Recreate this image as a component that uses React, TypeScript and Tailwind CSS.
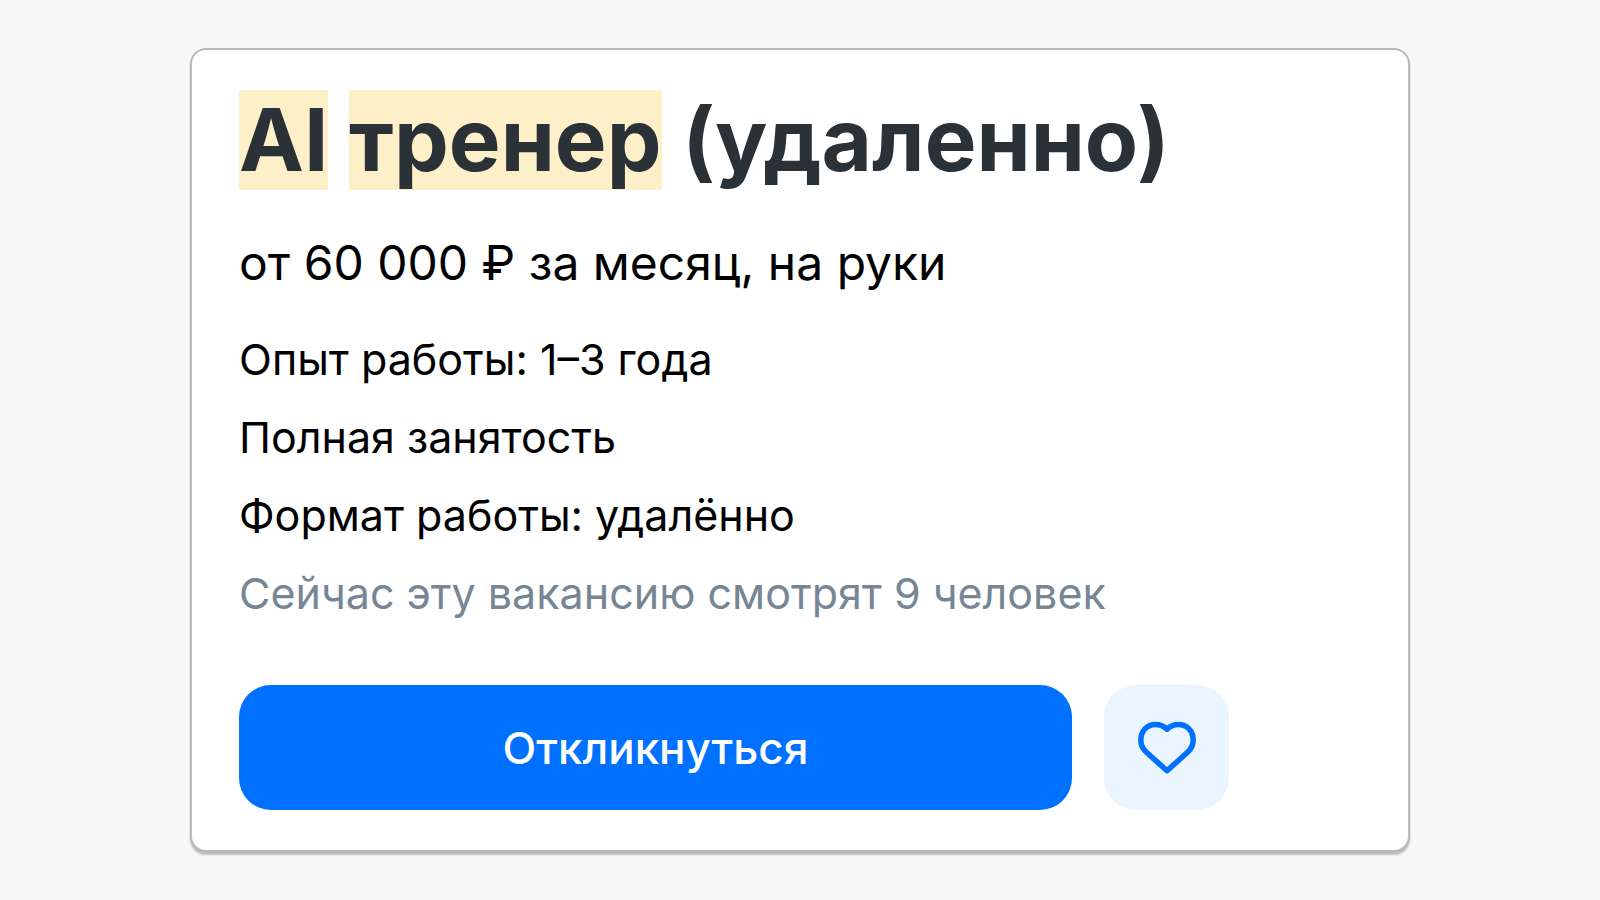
const details = ['Опыт работы: 1–3 года', 'Полная занятость', 'Формат работы: удалённо'];

function HeartIcon() {
  return (
    <svg
      viewBox="0 0 64 64"
      className="size-16"
      fill="none"
      stroke="#0070ff"
      strokeWidth="5.5"
      strokeLinejoin="round"
      aria-hidden="true"
    >
      <path d="M32 54.8 L11.2 36 C7.4 32.4 5.8 28.8 5.8 24.2 C5.8 15 12 8.5 20.5 8.500 C25 8.500 29 10.200 32 13.200 C35 10.200 39 8.500 43.500 8.500 C52 8.500 58.200 15 58.200 24.200 C58.200 28.800 56.600 32.400 52.800 36 Z" />
    </svg>
  );
}

export default function App() {
  return (
    <main className="min-h-screen bg-[#f7f7f7] px-6 py-12 font-['Inter','Liberation_Sans',sans-serif] text-black">
      <article className="mx-auto max-w-[1220px] rounded-2xl border-2 border-[#bababa] bg-white px-[47px] py-10 shadow-[0_3px_2px_#bababa]">
        <h1 className="text-[87px] leading-[100px] font-bold text-[#2a3137]">
          <mark className="inline-block bg-[#fdefc8] text-inherit">AI</mark>{' '}
          <mark className="inline-block bg-[#fdefc8] text-inherit">тренер</mark> (удаленно)
        </h1>
        <p className="mt-10 text-[48px] leading-[66px]">от 60 000 ₽ за месяц, на руки</p>
        <ul className="mt-6 text-[43px] leading-[78px]">
          {details.map((detail) => (
            <li key={detail}>{detail}</li>
          ))}
          <li className="text-[#768694]">Сейчас эту вакансию смотрят 9 человек</li>
        </ul>
        <div className="mt-[53px] flex gap-8">
          <button
            type="button"
            className="h-[125px] w-full max-w-[833px] rounded-[32px] bg-[#0070ff] text-[44px] font-medium text-white"
          >
            Откликнуться
          </button>
          <button
            type="button"
            aria-label="В избранное"
            className="flex size-[125px] shrink-0 items-center justify-center rounded-[32px] bg-[#ebf5ff]"
          >
            <HeartIcon />
          </button>
        </div>
      </article>
    </main>
  );
}
